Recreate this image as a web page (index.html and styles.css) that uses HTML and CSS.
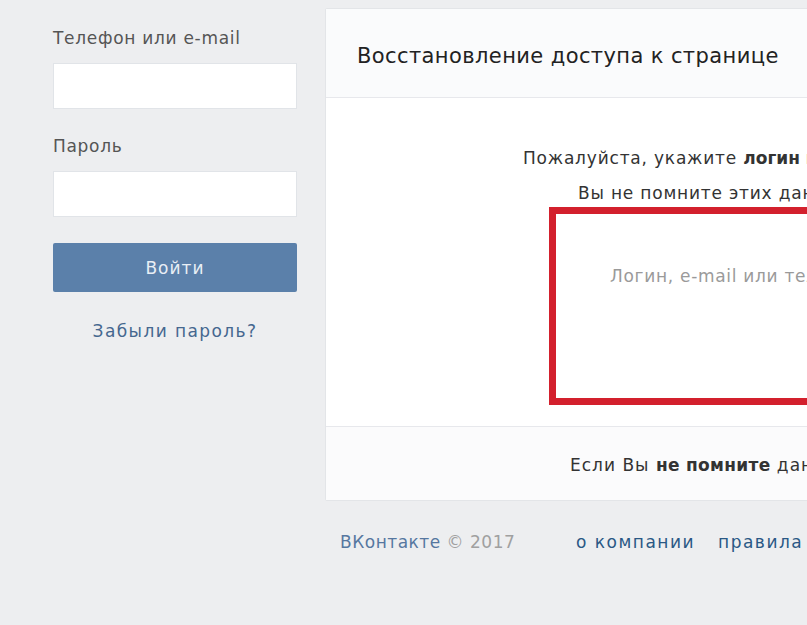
FILE: index.html
```html
<!DOCTYPE html>
<html lang="ru">
<head>
    <meta charset="UTF-8">
    <title>Восстановление доступа к странице</title>
    <meta name="viewport" content="width=device-width, initial-scale=1.0">
    <link rel="stylesheet" href="styles.css">
</head>
<body>

    <div class="page">
        <div class="login">
            <label class="login-label" for="login">Телефон или e-mail</label>
            <input class="login-input" type="text" id="login">

            <label class="login-label" for="pass">Пароль</label>
            <input class="login-input" type="password" id="pass">

            <button class="login-button">Войти</button>
            <a class="forgot" href="#">Забыли пароль?</a>
        </div>

        <div class="main">
            <div class="card">
                <div class="card-header">Восстановление доступа к странице</div>

                <div class="card-body">
                    <p class="hint hint-first">Пожалуйста, укажите <b>логин или телефон</b>, который Вы использовали для входа на сайт.</p>
                    <p class="hint hint-second">Вы не помните этих данных? Это не проблема.</p>
                    <div class="restore-box">
                        <input class="restore-input" type="text" placeholder="Логин, e-mail или телефон">
                    </div>
                </div>

                <div class="card-footer">
                    Если Вы <b>не помните</b> данных или не имеете доступа к телефону, нажмите сюда.
                </div>
            </div>

            <div class="footer">
                <span class="copy"><a href="#">ВКонтакте</a> © 2017</span>
                <a class="footer-link" href="#">о компании</a>
                <a class="footer-link" href="#">правила</a>
                <a class="footer-link" href="#">реклама</a>
            </div>
        </div>
    </div>

</body>
</html>
```

FILE: styles.css
```css
/* Сброс стилей */
* {
    margin: 0;
    padding: 0;
    box-sizing: border-box;
}

html, body {
    width: 807px;
    height: 625px;
    overflow: hidden;
}

body {
    font-family: 'DejaVu Sans', Tahoma, sans-serif;
    background-color: #edeef0;
    color: #222;
    font-size: 17px;
}

a {
    text-decoration: none;
    color: #2a5885;
}

.page {
    display: flex;
    align-items: flex-start;
    width: 1200px;
}

/* Левая колонка */
.login {
    width: 325px;
    padding: 28px 28px 0 53px;
    display: flex;
    flex-direction: column;
}

.login-label {
    color: #555;
    font-size: 17px;
    letter-spacing: 0.7px;
    line-height: 20px;
    margin-bottom: 15px;
}

.login-input {
    height: 46px;
    width: 244px;
    border: 1px solid #e1e4e8;
    background-color: #fff;
    margin-bottom: 27px;
}

.login-button {
    width: 244px;
    height: 49px;
    margin-top: -1px;
    border: none;
    border-radius: 2px;
    background-color: #5b80aa;
    color: #e8eef5;
    font-family: inherit;
    font-size: 17px;
    letter-spacing: 1px;
}

.forgot {
    margin-top: 29px;
    width: 244px;
    text-align: center;
    line-height: 20px;
    letter-spacing: 1.4px;
    color: #45678f;
}

/* Карточка */
.main {
    margin-top: 8px;
    width: 700px;
}

.card {
    background-color: #fff;
    border: 1px solid #e3e5e8;
    border-radius: 2px;
}

.card-header {
    height: 89px;
    padding: 34px 0 0 31px;
    background-color: #fafbfc;
    border-bottom: 1px solid #e7e8ec;
    font-size: 21px;
    letter-spacing: 0.4px;
    line-height: 26px;
    white-space: nowrap;
}

.card-body {
    padding: 50px 0 21px 0;
}

.hint {
    font-size: 17px;
    letter-spacing: 0.8px;
    line-height: 20px;
    white-space: nowrap;
    color: #333;
}

.hint b {
    letter-spacing: 0;
}

.hint-first {
    padding-left: 197px;
}

.hint-second {
    padding-left: 252px;
    margin-top: 15px;
}

.restore-box {
    margin: 4px 0 0 223px;
    height: 198px;
    border: 7px solid #d3202d;
    padding: 52px 0 0 54px;
}

.restore-input {
    border: none;
    outline: none;
    font-family: inherit;
    font-size: 17px;
    letter-spacing: 0.7px;
    width: 400px;
    background: transparent;
}

.restore-input::placeholder {
    color: #9a9a9a;
}

.card-footer {
    height: 74px;
    padding: 28px 0 0 244px;
    border-top: 1px solid #e7e8ec;
    background-color: #fbfbfc;
    font-size: 17px;
    letter-spacing: 1px;
    line-height: 20px;
    white-space: nowrap;
    color: #333;
}

.card-footer b {
    letter-spacing: 0.3px;
}

/* Подвал */
.footer {
    display: flex;
    padding: 31px 0 0 15px;
    font-size: 17px;
    line-height: 20px;
    white-space: nowrap;
}

.copy {
    color: #a0a0a0;
    width: 236px;
    letter-spacing: 0.5px;
}

.copy a {
    color: #5677a0;
}

.footer-link {
    margin-right: 23px;
    letter-spacing: 1.5px;
}
```
